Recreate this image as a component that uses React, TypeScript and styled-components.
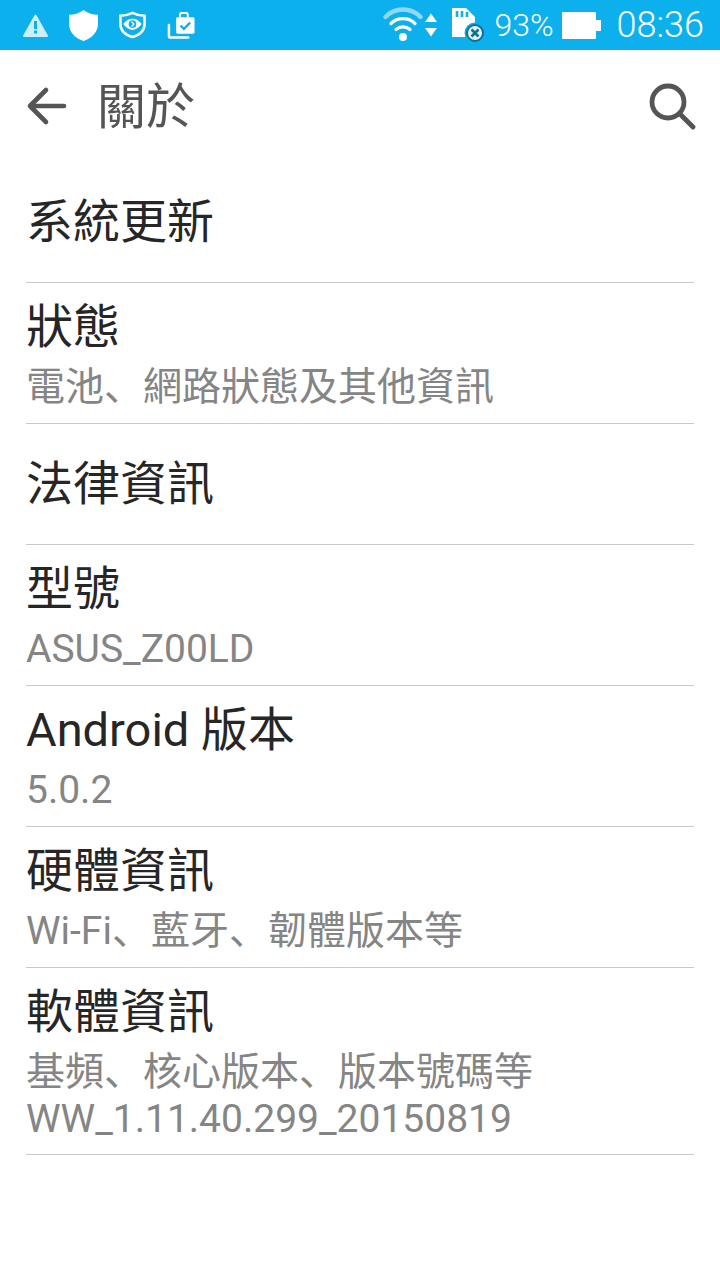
import styled, { createGlobalStyle } from "styled-components";

const GlobalStyle = createGlobalStyle`
  html, body {
    margin: 0;
    padding: 0;
    background: #fff;
  }
  body {
    font-family: Roboto, "Noto Sans CJK SC", sans-serif;
  }
`;

const Page = styled.div`
  width: 720px;
  height: 1280px;
  overflow: hidden;
  background: #fff;
`;

const StatusBar = styled.div`
  height: 50px;
  background: #0cb0ec;
  display: flex;
  align-items: center;
  justify-content: space-between;
  padding: 0 16px 0 23px;
  color: #fff;
`;

const StatusGroup = styled.div<{ $gap: number }>`
  display: flex;
  align-items: center;
  gap: ${(p) => p.$gap}px;
`;

const StatusIcon = styled.svg<{ $ml?: number }>`
  flex: none;
  margin-left: ${(p) => p.$ml ?? 0}px;
`;

const StatusText = styled.span<{ $size: number; $ml?: number }>`
  font-family: Roboto, sans-serif;
  font-weight: 300;
  font-size: ${(p) => p.$size}px;
  line-height: 50px;
  margin-left: ${(p) => p.$ml ?? 0}px;
`;

const Toolbar = styled.div`
  height: 112px;
  display: flex;
  align-items: center;
  padding: 0 24px 0 26px;
`;

const BackButton = styled.svg`
  width: 42px;
  height: 42px;
  flex: none;
`;

const ToolbarTitle = styled.h1`
  flex: 1;
  margin: 0 0 0 29px;
  padding-bottom: 6px;
  font-family: "Noto Sans CJK SC", sans-serif;
  font-size: 49px;
  font-weight: 400;
  line-height: 60px;
  color: #555;
`;

const SearchButton = styled.svg`
  width: 48px;
  height: 48px;
  flex: none;
`;

const List = styled.div`
  margin: 0 26px;
`;

const Row = styled.div`
  box-sizing: border-box;
  border-bottom: 1px solid #c9c9c9;
  display: flex;
  flex-direction: column;
  justify-content: center;
`;

const RowTitle = styled.div`
  font-family: Roboto, "Noto Sans CJK SC", sans-serif;
  font-size: 47px;
  line-height: 62px;
  color: #262626;
`;

const RowSub = styled.div`
  font-family: Roboto, "Noto Sans CJK SC", sans-serif;
  font-size: 39px;
  line-height: 47px;
  color: #858585;
  ${RowTitle} + & {
    margin-top: 6px;
  }
  &:last-child {
    margin-bottom: -1px;
  }
`;

type Item = { title: string; lines?: string[]; height: number };

const items: Item[] = [
  { title: "系統更新", height: 121 },
  { title: "狀態", lines: ["電池、網路狀態及其他資訊"], height: 141 },
  { title: "法律資訊", height: 121 },
  { title: "型號", lines: ["ASUS_Z00LD"], height: 141 },
  { title: "Android 版本", lines: ["5.0.2"], height: 141 },
  { title: "硬體資訊", lines: ["Wi-Fi、藍牙、韌體版本等"], height: 141 },
  { title: "軟體資訊", lines: ["基頻、核心版本、版本號碼等", "WW_1.11.40.299_20150819"], height: 187 },
];

export default function App() {
  return (
    <Page>
      <GlobalStyle />
      <StatusBar>
        <StatusGroup $gap={21}>
          <StatusIcon width="25" height="23" viewBox="0 0 25 23">
            <path d="M12.5 1.5 L24 22 H1 Z" fill="#cdeefb" stroke="#cdeefb" strokeWidth="2" strokeLinejoin="round" />
            <rect x="11" y="7" width="3" height="8" fill="#0cb0ec" />
            <rect x="11" y="16.5" width="3" height="3" fill="#0cb0ec" />
          </StatusIcon>
          <StatusIcon width="29" height="31" viewBox="0 0 30 32">
            <path d="M15 0 C19 3 24 5 30 5 V14 C30 23 24 29 15 32 C6 29 0 23 0 14 V5 C6 5 11 3 15 0 Z" fill="#fff" />
          </StatusIcon>
          <StatusIcon width="27" height="28" viewBox="0 0 28 28">
            <path d="M14 1.5 C18 3.5 22 4.5 26.5 4.5 V13 C26.5 20 21 24.5 14 26.5 C7 24.5 1.5 20 1.5 13 V4.5 C6 4.5 10 3.5 14 1.5 Z" fill="none" stroke="#fff" strokeWidth="2.6" />
            <path d="M4.5 13 C8 8.5 11 7.5 14 7.5 C17 7.5 20 8.5 23.5 13 C20 17.5 17 19 14 19 C11 19 8 17.5 4.5 13 Z" fill="#fff" />
            <circle cx="14" cy="13" r="4" fill="#0cb0ec" />
            <path d="M13 10.5 L15.5 13 L13 15.5" fill="none" stroke="#fff" strokeWidth="1.4" />
          </StatusIcon>
          <StatusIcon width="28" height="29" viewBox="0 0 29 29">
            <path d="M2 14 V25 Q2 27 4 27 H22" fill="none" stroke="#fff" strokeWidth="2.6" strokeLinecap="round" />
            <path d="M13.5 6 V3 Q13.5 1.5 15 1.5 H20 Q21.5 1.5 21.5 3 V6" fill="none" stroke="#fff" strokeWidth="2" />
            <rect x="9.5" y="6" width="19" height="17" rx="1.5" fill="#fff" />
            <path d="M14 14.5 L17.5 18 L24 11.5" fill="none" stroke="#0cb0ec" strokeWidth="2.4" />
          </StatusIcon>
        </StatusGroup>
        <StatusGroup $gap={0}>
          <StatusIcon width="40" height="36" viewBox="0 0 40 36">
            <path d="M2.5 10 C12 0 28 0 37.5 10" fill="none" stroke="#8fd8f5" strokeWidth="4.4" strokeLinecap="round" />
            <path d="M8 16.5 C14.5 10 25.5 10 32 16.5" fill="none" stroke="#fff" strokeWidth="3.2" strokeLinecap="round" />
            <path d="M13 22.5 C17 19 23 19 27 22.5" fill="none" stroke="#fff" strokeWidth="3.2" strokeLinecap="round" />
            <circle cx="20" cy="30" r="4" fill="#fff" />
          </StatusIcon>
          <StatusIcon $ml={2} width="12" height="24" viewBox="0 0 12 24">
            <path d="M6 0.5 L12 9 H0 Z" fill="#fff" />
            <path d="M6 23.5 L12 15 H0 Z" fill="#fff" />
          </StatusIcon>
          <StatusIcon $ml={14} width="36" height="36" viewBox="0 0 36 36">
            <path d="M1 1 H15 L24 10 V30 H1 Z" fill="#fff" />
            <path d="M6 4 V10 M11 4 V10 M16 5 V10" stroke="#0cb0ec" strokeWidth="2.6" />
            <circle cx="24" cy="26" r="10.5" fill="#0cb0ec" />
            <circle cx="24" cy="26" r="8" fill="#e4f6fd" stroke="#0d6f98" strokeWidth="2" />
            <path d="M20.5 22.5 L27.5 29.5 M27.5 22.5 L20.5 29.5" stroke="#0d6f98" strokeWidth="2.6" />
          </StatusIcon>
          <StatusText $size={32} $ml={7}>93%</StatusText>
          <StatusIcon $ml={8} width="39" height="27" viewBox="0 0 39 27">
            <rect x="0" y="0" width="34" height="27" rx="1" fill="#fff" />
            <rect x="34" y="8" width="5" height="11" fill="#fff" />
          </StatusIcon>
          <StatusText $size={36} $ml={16}>08:36</StatusText>
        </StatusGroup>
      </StatusBar>
      <Toolbar>
        <BackButton viewBox="0 0 42 42">
          <path d="M38 21 H6 M20 5 L4 21 L20 37" fill="none" stroke="#555" strokeWidth="4.6" strokeLinecap="round" strokeLinejoin="round" />
        </BackButton>
        <ToolbarTitle>關於</ToolbarTitle>
        <SearchButton viewBox="0 0 48 48">
          <circle cx="20" cy="20" r="16" fill="none" stroke="#555" strokeWidth="4.8" />
          <path d="M31.5 31.5 L45 45" stroke="#555" strokeWidth="4.8" strokeLinecap="round" />
        </SearchButton>
      </Toolbar>
      <List>
        {items.map((item) => (
          <Row key={item.title} style={{ height: item.height }}>
            <RowTitle>{item.title}</RowTitle>
            {item.lines?.map((line) => (
              <RowSub key={line}>{line}</RowSub>
            ))}
          </Row>
        ))}
      </List>
    </Page>
  );
}
